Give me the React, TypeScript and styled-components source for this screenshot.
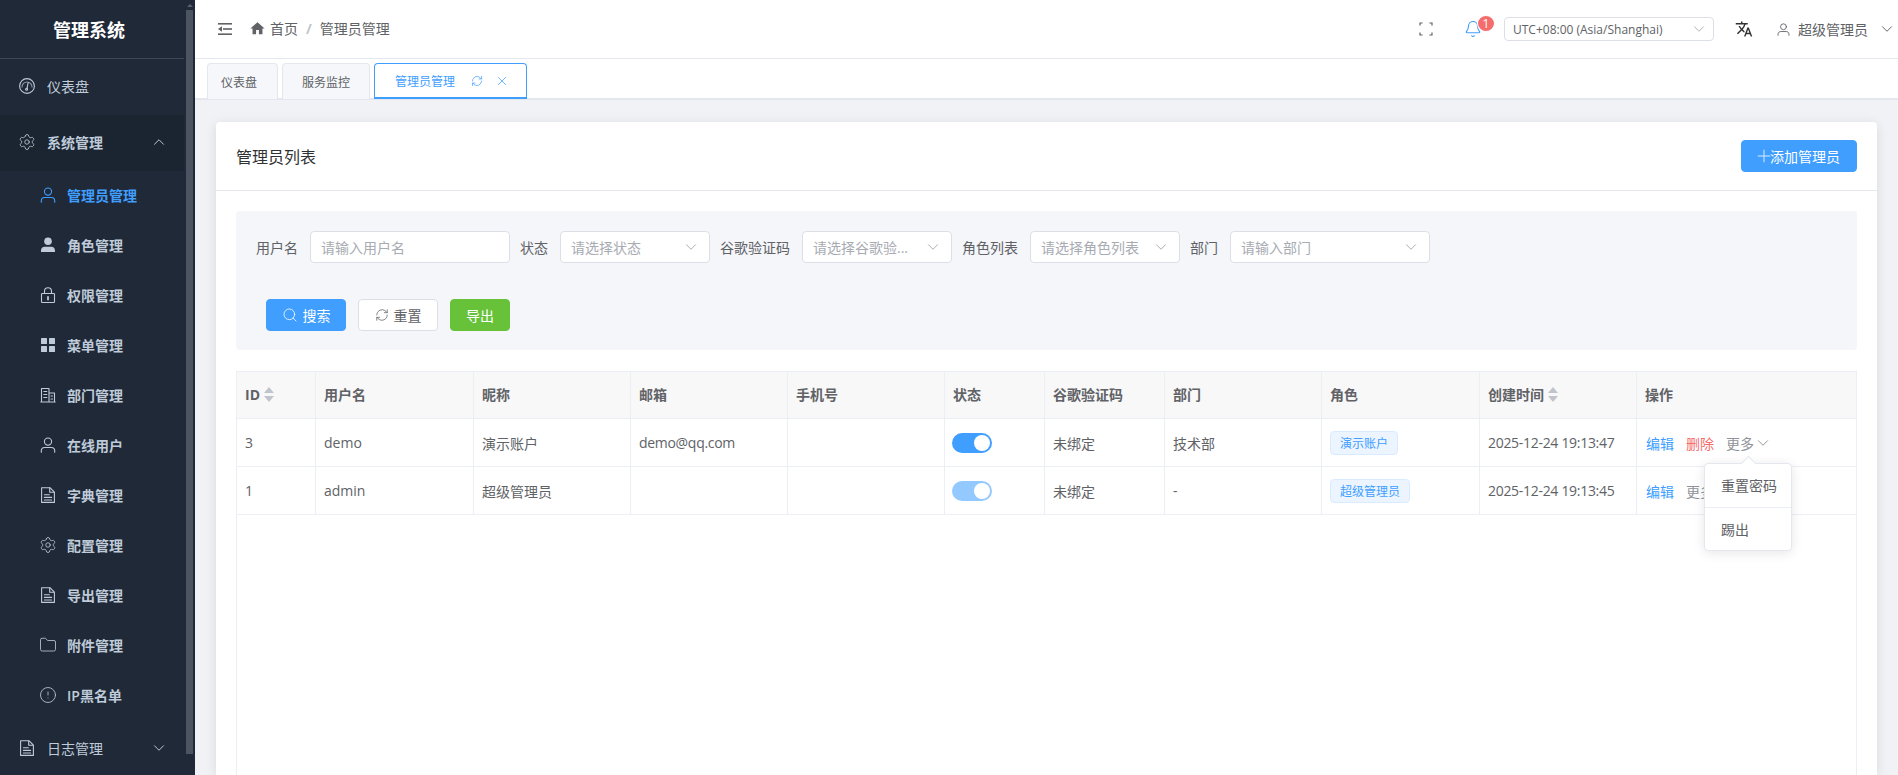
import React from 'react';
import styled, { createGlobalStyle } from 'styled-components';
import { ChevronDown, ChevronUp, Bell, RefreshCw, X, Search, Plus, Settings, Folder, CircleAlert } from 'lucide-react';
import { MdHome, MdTranslate } from 'react-icons/md';

const UI = `"Open Sans", "Noto Sans CJK SC", sans-serif`;

const Global = createGlobalStyle`
  html, body { margin: 0; padding: 0; height: 100%; overflow: hidden; }
  body { font-family: ${UI}; font-size: 14px; color: #606266; background: #f0f2f5; }
  * { box-sizing: border-box; }
`;

const Shell = styled.div`
  display: flex;
  width: 1898px;
  height: 775px;
  overflow: hidden;
`;

const Sidebar = styled.aside`
  flex: 0 0 195px;
  display: flex;
  background: #1f2937;
  overflow: hidden;
`;
const SideBody = styled.div`
  flex: 0 0 184px;
  display: flex;
  flex-direction: column;
`;
const Logo = styled.div`
  flex: 0 0 59px;
  display: flex;
  align-items: center;
  justify-content: center;
  padding-right: 6px;
  color: #fff;
  font-size: 18px;
  font-weight: 700;
  border-bottom: 1px solid #3d4654;
`;
const IconBox = styled.span`
  flex: 0 0 16px;
  min-width: 0;
  width: 16px;
  height: 16px;
  display: flex;
  align-items: center;
  justify-content: center;
  & > svg { flex: none; }
`;
const MenuRow = styled.div<{ $active?: boolean }>`
  flex: 0 0 56px;
  display: flex;
  align-items: center;
  gap: 12px;
  padding: 0 0 2px 19px;
  color: #bfcbd9;
  background: ${p => (p.$active ? '#1b2431' : 'transparent')};
  font-weight: ${p => (p.$active ? 600 : 400)};
  & > svg:last-child { margin-left: auto; margin-right: 16px; }
`;
const SubRow = styled.div<{ $active?: boolean }>`
  flex: 0 0 50px;
  display: flex;
  align-items: center;
  gap: 11px;
  padding: 0 0 2px 40px;
  color: ${p => (p.$active ? '#409eff' : '#bfcbd9')};
  font-weight: 600;
`;
const ScrollTrack = styled.div`
  flex: 0 0 11px;
  display: flex;
  flex-direction: column;
  align-items: center;
  padding: 0 2px;
`;
const ScrollArrow = styled.div`
  flex: 0 0 3px;
  width: 0;
  height: 0;
  margin: 4px 0 3px;
  border-left: 3px solid transparent;
  border-right: 3px solid transparent;
  border-bottom: 3px solid #5a6270;
`;
const ScrollThumb = styled.div`
  width: 7px;
  height: 744px;
  background: #4d5461;
`;

const Column = styled.div`
  flex: 1;
  min-width: 0;
  display: flex;
  flex-direction: column;
`;

const Header = styled.header`
  flex: 0 0 59px;
  display: flex;
  align-items: center;
  padding: 0 2px 0 22px;
  background: #fff;
  border-bottom: 1px solid #e4e7ed;
`;
const Crumbs = styled.div`
  display: flex;
  align-items: center;
  margin: 0 0 2px 16px;
  color: #606266;
`;
const HomeText = styled.span`
  margin-left: 4px;
`;
const CrumbSep = styled.span`
  margin: 0 8px;
  color: #c0c4cc;
  font-weight: 700;
`;
const HeaderRight = styled.div`
  margin-left: auto;
  display: flex;
  align-items: center;
`;
const BellWrap = styled.div`
  position: relative;
  display: flex;
  margin: 0 22px 0 31px;
  color: #409eff;
`;
const Badge = styled.span`
  position: absolute;
  top: -5px;
  left: 13px;
  width: 18px;
  height: 17px;
  border-radius: 50%;
  background: #f56c6c;
  border: 1px solid #fff;
  color: #fff;
  font-size: 12px;
  line-height: 15px;
  text-align: center;
`;
const ZoneSelect = styled.div`
  width: 210px;
  height: 24px;
  display: flex;
  align-items: center;
  justify-content: space-between;
  padding: 0 5px 0 8px;
  border: 1px solid #dcdfe6;
  border-radius: 4px;
  font-size: 12px;
  color: #606266;
`;
const LangIcon = styled.span`
  display: flex;
  margin-left: 21px;
  color: #303133;
`;
const UserBox = styled.div`
  display: flex;
  align-items: center;
  margin-left: 24px;
  gap: 8px;
  color: #606266;
  & > svg:last-child { margin-left: 2px; }
`;

const TabBar = styled.nav`
  flex: 0 0 41px;
  display: flex;
  align-items: flex-start;
  gap: 4px;
  padding: 4px 0 0 12px;
  background: #fff;
  border-bottom: 2px solid #e4e7ed;
`;
const Tab = styled.div<{ $active?: boolean; $pad: string }>`
  height: 36px;
  margin-bottom: -1px;
  display: flex;
  align-items: center;
  padding: ${p => p.$pad};
  font-size: 12px;
  border-radius: 4px 4px 0 0;
  border: 1px solid ${p => (p.$active ? '#409eff' : '#e4e7ed')};
  border-bottom: ${p => (p.$active ? '2px solid #409eff' : 'none')};
  background: ${p => (p.$active ? '#fff' : '#f5f7fa')};
  color: ${p => (p.$active ? '#409eff' : '#606266')};
  gap: 12px;
`;
const ActiveText = styled.span`
  margin-right: 4px;
`;

const Main = styled.main`
  flex: 1;
  min-height: 0;
  display: flex;
  flex-direction: column;
  padding: 22px 21px 0;
  background: #f0f2f5;
`;
const Card = styled.section`
  flex: 1;
  display: flex;
  flex-direction: column;
  background: #fff;
  border-radius: 4px 4px 0 0;
  box-shadow: 0 2px 12px rgba(0, 0, 0, 0.1);
`;
const CardHead = styled.div`
  flex: 0 0 69px;
  display: flex;
  align-items: center;
  justify-content: space-between;
  padding: 0 20px;
  border-bottom: 1px solid #e4e7ed;
  font-size: 16px;
  color: #303133;
`;
const CardBody = styled.div`
  flex: 1;
  min-height: 0;
  display: flex;
  flex-direction: column;
  padding: 20px 20px 0 20px;
`;
const Button = styled.button<{ $kind?: 'primary' | 'success' | 'plain' }>`
  height: 32px;
  display: inline-flex;
  align-items: center;
  justify-content: center;
  font-family: ${UI};
  font-size: 14px;
  border-radius: 4px;
  border: 1px solid ${p => (p.$kind === 'plain' ? '#dcdfe6' : p.$kind === 'success' ? '#67c23a' : '#409eff')};
  background: ${p => (p.$kind === 'plain' ? '#fff' : p.$kind === 'success' ? '#67c23a' : '#409eff')};
  color: ${p => (p.$kind === 'plain' ? '#606266' : '#fff')};
  padding: 0;
`;
const AddButton = styled(Button)`
  width: 116px;
`;
const PlusBox = styled.span`
  flex: 0 0 12px;
  width: 12px;
  min-width: 0;
  display: flex;
  align-items: center;
  justify-content: center;
  color: #d6eaff;
  & > svg { flex: none; }
`;
const ActionButton = styled(Button)<{ $w: number }>`
  width: ${p => p.$w}px;
  gap: 5px;
`;

const Filter = styled.div`
  flex: 0 0 139px;
  display: flex;
  flex-direction: column;
  padding: 20px 20px 0;
  background: #f5f6fa;
  border-radius: 4px;
`;
const FilterRow = styled.div`
  display: flex;
  align-items: center;
  gap: 10px;
`;
const FormItem = styled.label`
  display: flex;
  align-items: center;
  gap: 12px;
  color: #606266;
`;
const Field = styled.div<{ $w: number }>`
  width: ${p => p.$w}px;
  height: 32px;
  display: flex;
  align-items: center;
  justify-content: space-between;
  padding: 0 9px 0 10px;
  background: #fff;
  border: 1px solid #dcdfe6;
  border-radius: 4px;
  color: #a8abb2;
  overflow: hidden;
  white-space: nowrap;
`;
const ButtonRow = styled.div`
  display: flex;
  gap: 12px;
  margin: 36px 0 0 10px;
`;

const TableFrame = styled.div`
  flex: 1;
  margin-top: 21px;
  border: 1px solid #ebeef5;
  border-bottom: none;
`;
const Table = styled.table`
  width: 100%;
  table-layout: fixed;
  border-collapse: separate;
  border-spacing: 0;
`;
const Th = styled.th<{ $w?: number }>`
  width: ${p => (p.$w ? `${p.$w}px` : 'auto')};
  height: 47px;
  padding: 0 8px 2px;
  text-align: left;
  font-weight: 700;
  color: #606266;
  background: #f8f8f9;
  border-right: 1px solid #ebeef5;
  border-bottom: 1px solid #ebeef5;
  white-space: nowrap;
  &:last-child { border-right: none; }
`;
const Td = styled.td`
  height: 48px;
  padding: 0 8px;
  color: #606266;
  border-right: 1px solid #ebeef5;
  border-bottom: 1px solid #ebeef5;
  white-space: nowrap;
  &:last-child { border-right: none; }
`;
const SortHead = styled.span`
  display: inline-flex;
  align-items: center;
  gap: 4px;
`;
const Carets = styled.span`
  display: inline-flex;
  flex-direction: column;
  gap: 3px;
`;
const Caret = styled.i<{ $down?: boolean }>`
  display: block;
  width: 0;
  height: 0;
  border-left: 5.5px solid transparent;
  border-right: 5.5px solid transparent;
  border-bottom: ${p => (p.$down ? 'none' : '6px solid #c0c4cc')};
  border-top: ${p => (p.$down ? '6px solid #c0c4cc' : 'none')};
`;
const Switch = styled.span<{ $dim?: boolean }>`
  display: block;
  width: 40px;
  height: 20px;
  margin-left: -1px;
  padding: 2px;
  border-radius: 10px;
  background: ${p => (p.$dim ? '#94c9ff' : '#409eff')};
  &::after {
    content: '';
    display: block;
    width: 16px;
    height: 16px;
    margin-left: 20px;
    border-radius: 50%;
    background: #fff;
  }
`;
const Tag = styled.span`
  display: inline-flex;
  align-items: center;
  height: 24px;
  padding: 0 9px;
  font-size: 12px;
  color: #409eff;
  background: #ecf5ff;
  border: 1px solid #d9ecff;
  border-radius: 4px;
`;
const Actions = styled.div`
  display: flex;
  align-items: center;
  gap: 12px;
  margin-left: 1px;
`;
const LinkText = styled.span<{ $color: string }>`
  color: ${p => p.$color};
`;
const More = styled.span`
  position: relative;
  display: inline-flex;
  align-items: center;
  gap: 0;
  color: #909399;
`;
const Dropdown = styled.div`
  position: absolute;
  z-index: 5;
  top: 30px;
  left: -22px;
  width: 88px;
  height: 88px;
  background: #fff;
  border: 1px solid #e4e7ed;
  border-radius: 4px;
  box-shadow: 0 2px 12px rgba(0, 0, 0, 0.1);
  color: #606266;
  &::before {
    content: '';
    position: absolute;
    top: -6px;
    left: 38px;
    width: 10px;
    height: 10px;
    background: #fff;
    border-left: 1px solid #e4e7ed;
    border-top: 1px solid #e4e7ed;
    transform: rotate(45deg);
  }
`;
const DropItem = styled.div<{ $divided?: boolean }>`
  height: ${p => (p.$divided ? '44px' : '43px')};
  display: flex;
  align-items: center;
  padding-left: 16px;
  border-top: ${p => (p.$divided ? '1px solid #ebeef5' : 'none')};
`;
const MoreMuted = styled.span`
  color: #909399;
`;
const Latin = styled.span`
  letter-spacing: -0.3px;
`;

const Stroke: React.FC<{ size?: number; children: React.ReactNode }> = ({ size = 16, children }) => (
  <svg width={size} height={size} viewBox="0 0 16 16" fill="none" stroke="currentColor" strokeWidth="1.1" strokeLinecap="round" strokeLinejoin="round">
    {children}
  </svg>
);
const Odometer = () => (
  <Stroke>
    <circle cx="8" cy="8" r="7.4" />
    <path d="M3 9a5 5 0 0 1 10 0" opacity=".7" />
    <path d="M9.2 4.5 8 10.3" />
    <circle cx="7.6" cy="11.2" r="1" />
  </Stroke>
);
const UserIcon: React.FC<{ size?: number }> = ({ size = 16 }) => (
  <Stroke size={size}>
    <circle cx="8" cy="4.6" r="3.6" />
    <path d="M1.3 15.2v-1.4c0-2 1.5-3.3 3.4-3.3h6.6c1.9 0 3.4 1.3 3.4 3.3v1.4" />
  </Stroke>
);
const UserFilled = () => (
  <svg width="16" height="16" viewBox="0 0 16 16" fill="currentColor">
    <circle cx="8" cy="4.3" r="3.8" />
    <path d="M1 15v-1.6c0-2 1.6-3.6 3.6-3.6h6.8c2 0 3.6 1.6 3.6 3.6V15z" />
  </svg>
);
const LockIcon = () => (
  <Stroke>
    <rect x="1.5" y="6.5" width="13" height="9" rx=".8" />
    <path d="M4.5 6.5V4.2a3.5 3.5 0 0 1 7 0v2.3" />
    <path d="M8 10v2.5" strokeWidth="1.8" />
  </Stroke>
);
const MenuIcon = () => (
  <svg width="16" height="16" viewBox="0 0 16 16" fill="currentColor">
    <rect x="1" y="1" width="6" height="6" rx=".6" />
    <rect x="9" y="1" width="6" height="6" rx=".6" />
    <rect x="1" y="9" width="6" height="6" rx=".6" />
    <rect x="9" y="9" width="6" height="6" rx=".6" />
  </svg>
);
const Building = () => (
  <Stroke>
    <path d="M1.5 15V1.5h7.5V15M9 6h5.5v9M.8 15h14.4" />
    <path d="M3.8 4.5h3M3.8 7.5h3M3.8 10.5h3M11 9h1.5M11 12h1.5" />
  </Stroke>
);
const DocIcon = () => (
  <Stroke>
    <path d="M1.6 15.4V.7h8.3l4.5 4.5v10.2z" />
    <path d="M9.7.9v4.4h4.5M4.4 7.8h5M4.4 10.4h7.2M4.4 13h7.2" />
  </Stroke>
);
const Fold = () => (
  <svg width="16" height="16" viewBox="0 0 16 16" fill="#606266">
    <rect x="1" y="2" width="14" height="1.6" />
    <rect x="6" y="7.2" width="9" height="1.6" />
    <rect x="1" y="12.4" width="14" height="1.6" />
    <path d="M5 5.2v5.6L1 8z" />
  </svg>
);
const FullScreen = () => (
  <svg width="14" height="14" viewBox="0 0 14 14" fill="none" stroke="#606266" strokeWidth="1.2">
    <path d="M1 3.6V1h2.6M10.4 1H13v2.6M13 10.4V13h-2.6M3.6 13H1v-2.6" />
  </svg>
);

const subs = [
  { name: '管理员管理', icon: <UserIcon />, active: true },
  { name: '角色管理', icon: <UserFilled /> },
  { name: '权限管理', icon: <LockIcon /> },
  { name: '菜单管理', icon: <MenuIcon /> },
  { name: '部门管理', icon: <Building /> },
  { name: '在线用户', icon: <UserIcon /> },
  { name: '字典管理', icon: <DocIcon /> },
  { name: '配置管理', icon: <Settings size={18} strokeWidth={1.1} /> },
  { name: '导出管理', icon: <DocIcon /> },
  { name: '附件管理', icon: <Folder size={18} strokeWidth={1.1} /> },
  { name: 'IP黑名单', icon: <CircleAlert size={18} strokeWidth={1.1} /> },
];

const Down = ({ size = 18 }: { size?: number }) => <ChevronDown size={size} strokeWidth={1.3} />;

const SortTitle: React.FC<{ children: React.ReactNode }> = ({ children }) => (
  <SortHead>
    {children}
    <Carets>
      <Caret />
      <Caret $down />
    </Carets>
  </SortHead>
);

export default function App() {
  return (
    <Shell>
      <Global />
      <Sidebar>
        <SideBody>
          <Logo>管理系统</Logo>
          <MenuRow>
            <IconBox>
              <Odometer />
            </IconBox>
            <span>仪表盘</span>
          </MenuRow>
          <MenuRow $active>
            <IconBox>
              <Settings size={18} strokeWidth={1.1} />
            </IconBox>
            <span>系统管理</span>
            <ChevronUp size={18} strokeWidth={1.3} />
          </MenuRow>
          {subs.map(s => (
            <SubRow key={s.name} $active={s.active}>
              <IconBox>{s.icon}</IconBox>
              <span>{s.name}</span>
            </SubRow>
          ))}
          <MenuRow>
            <IconBox>
              <DocIcon />
            </IconBox>
            <span>日志管理</span>
            <ChevronDown size={18} strokeWidth={1.3} />
          </MenuRow>
        </SideBody>
        <ScrollTrack>
          <ScrollArrow />
          <ScrollThumb />
        </ScrollTrack>
      </Sidebar>
      <Column>
        <Header>
          <Fold />
          <Crumbs>
            <MdHome size={17} color="#606266" />
            <HomeText>首页</HomeText>
            <CrumbSep>/</CrumbSep>
            <span>管理员管理</span>
          </Crumbs>
          <HeaderRight>
            <FullScreen />
            <BellWrap>
              <Bell size={18} strokeWidth={1.5} />
              <Badge>1</Badge>
            </BellWrap>
            <ZoneSelect>
              <span>UTC+08:00 (Asia/Shanghai)</span>
              <ChevronDown size={18} strokeWidth={1.2} color="#a8abb2" />
            </ZoneSelect>
            <LangIcon>
              <MdTranslate size={18} />
            </LangIcon>
            <UserBox>
              <UserIcon size={13} />
              <span>超级管理员</span>
              <Down />
            </UserBox>
          </HeaderRight>
        </Header>
        <TabBar>
          <Tab $pad="0 20px 0 13px">仪表盘</Tab>
          <Tab $pad="0 19px">服务监控</Tab>
          <Tab $active $pad="0 17px 0 20px">
            <ActiveText>管理员管理</ActiveText>
            <RefreshCw size={12} strokeWidth={1.4} />
            <X size={14} strokeWidth={1.3} />
          </Tab>
        </TabBar>
        <Main>
          <Card>
            <CardHead>
              <span>管理员列表</span>
              <AddButton $kind="primary">
                <PlusBox>
                  <Plus size={20} strokeWidth={1.2} />
                </PlusBox>
                添加管理员
              </AddButton>
            </CardHead>
            <CardBody>
              <Filter>
                <FilterRow>
                  <FormItem>
                    用户名
                    <Field $w={200}>请输入用户名</Field>
                  </FormItem>
                  <FormItem>
                    状态
                    <Field $w={150}>
                      请选择状态
                      <Down />
                    </Field>
                  </FormItem>
                  <FormItem>
                    谷歌验证码
                    <Field $w={150}>
                      请选择谷歌验...
                      <Down />
                    </Field>
                  </FormItem>
                  <FormItem>
                    角色列表
                    <Field $w={150}>
                      请选择角色列表
                      <Down />
                    </Field>
                  </FormItem>
                  <FormItem>
                    部门
                    <Field $w={200}>
                      请输入部门
                      <Down />
                    </Field>
                  </FormItem>
                </FilterRow>
                <ButtonRow>
                  <ActionButton $kind="primary" $w={80}>
                    <Search size={16} strokeWidth={1.2} />
                    搜索
                  </ActionButton>
                  <ActionButton $kind="plain" $w={80}>
                    <RefreshCw size={14} strokeWidth={1.3} />
                    重置
                  </ActionButton>
                  <ActionButton $kind="success" $w={60}>
                    导出
                  </ActionButton>
                </ButtonRow>
              </Filter>
              <TableFrame>
                <Table>
                  <thead>
                    <tr>
                      <Th $w={79}>
                        <SortTitle>ID</SortTitle>
                      </Th>
                      <Th $w={158}>用户名</Th>
                      <Th $w={157}>昵称</Th>
                      <Th $w={157}>邮箱</Th>
                      <Th $w={157}>手机号</Th>
                      <Th $w={100}>状态</Th>
                      <Th $w={120}>谷歌验证码</Th>
                      <Th $w={157}>部门</Th>
                      <Th $w={158}>角色</Th>
                      <Th $w={157}>
                        <SortTitle>创建时间</SortTitle>
                      </Th>
                      <Th>操作</Th>
                    </tr>
                  </thead>
                  <tbody>
                    <tr>
                      <Td>3</Td>
                      <Td>demo</Td>
                      <Td>演示账户</Td>
                      <Td>
                        <Latin>demo@qq.com</Latin>
                      </Td>
                      <Td />
                      <Td>
                        <Switch />
                      </Td>
                      <Td>未绑定</Td>
                      <Td>技术部</Td>
                      <Td>
                        <Tag>演示账户</Tag>
                      </Td>
                      <Td>
                        <Latin>2025-12-24 19:13:47</Latin>
                      </Td>
                      <Td>
                        <Actions>
                          <LinkText $color="#409eff">编辑</LinkText>
                          <LinkText $color="#f56c6c">删除</LinkText>
                          <More>
                            更多
                            <Down />
                            <Dropdown>
                              <DropItem>重置密码</DropItem>
                              <DropItem $divided>踢出</DropItem>
                            </Dropdown>
                          </More>
                        </Actions>
                      </Td>
                    </tr>
                    <tr>
                      <Td>1</Td>
                      <Td>admin</Td>
                      <Td>超级管理员</Td>
                      <Td />
                      <Td />
                      <Td>
                        <Switch $dim />
                      </Td>
                      <Td>未绑定</Td>
                      <Td>-</Td>
                      <Td>
                        <Tag>超级管理员</Tag>
                      </Td>
                      <Td>
                        <Latin>2025-12-24 19:13:45</Latin>
                      </Td>
                      <Td>
                        <Actions>
                          <LinkText $color="#409eff">编辑</LinkText>
                          <MoreMuted>更多</MoreMuted>
                        </Actions>
                      </Td>
                    </tr>
                  </tbody>
                </Table>
              </TableFrame>
            </CardBody>
          </Card>
        </Main>
      </Column>
    </Shell>
  );
}
